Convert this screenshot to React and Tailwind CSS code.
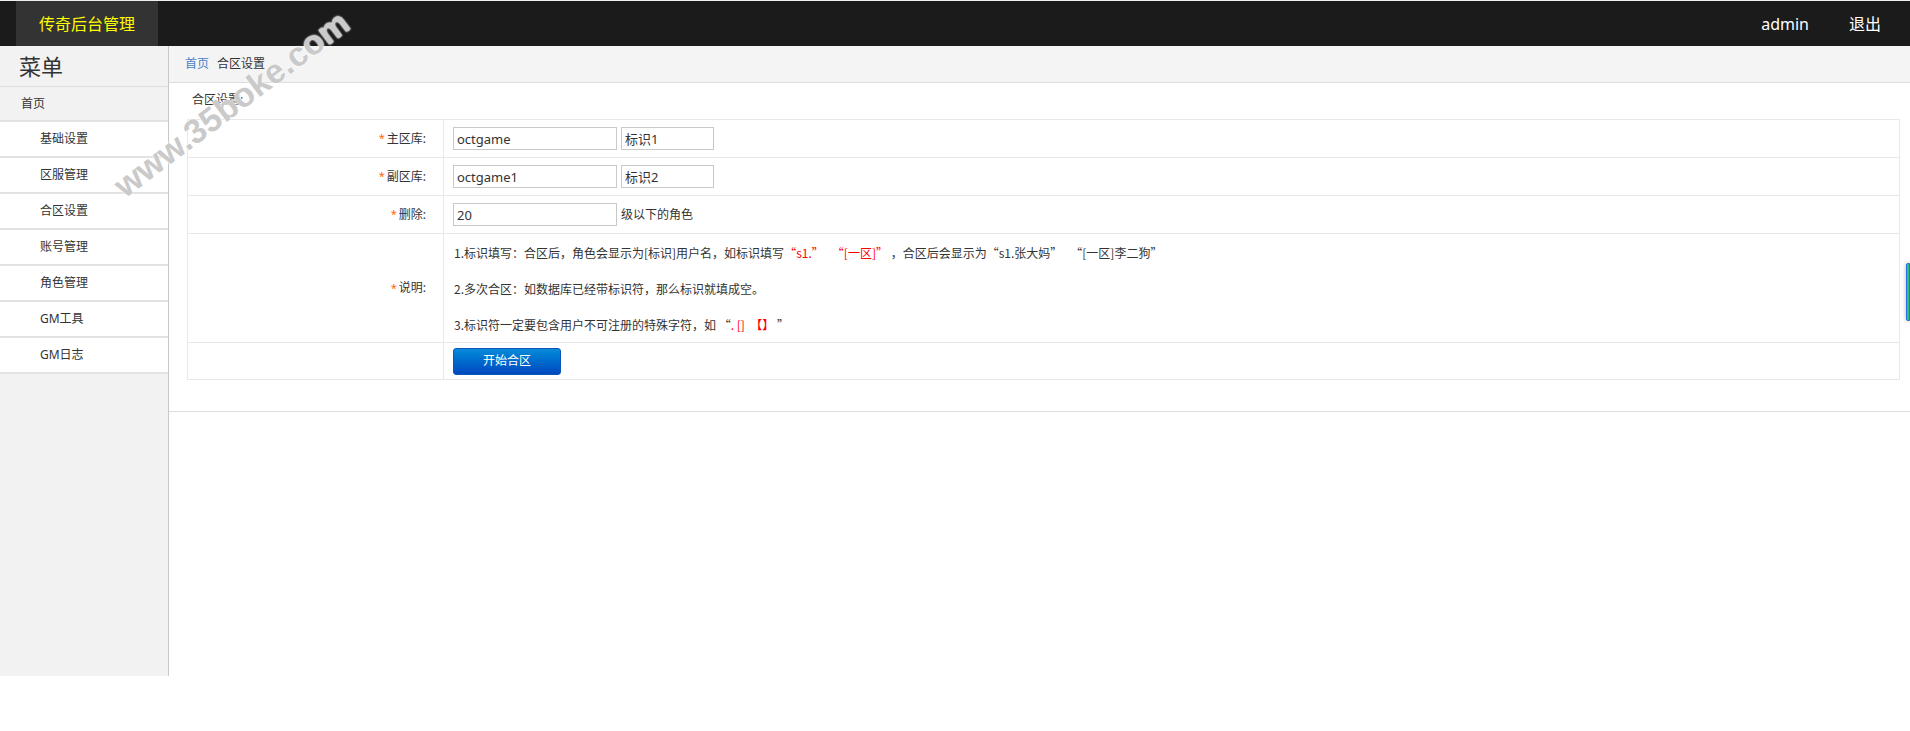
import React from "react";

const menuItems = ["基础设置", "区服管理", "合区设置", "账号管理", "角色管理", "GM工具", "GM日志"];

const Label = ({ text }) => (
  <div className="w-[256px] shrink-0 border-r border-[#e8e8e8] flex items-center justify-end pr-[17px]">
    {text && <span className="text-[#ff6600] text-[11px] mr-[2px]">*</span>}
    {text}
  </div>
);

const Input = ({ value, width }) => (
  <input
    readOnly
    value={value}
    className={`${width} h-[23px] border border-[#c9c9c9] px-[3px] text-[13px] text-[#333] outline-none`}
  />
);

const App = () => {
  return (
    <div className="relative min-h-[731px] bg-white text-[12px] text-[#333] font-['Noto_Sans','Noto_Sans_CJK_SC',sans-serif]">
      <div className="h-px bg-[#efefef]" />
      {/* top bar */}
      <header className="h-[45px] bg-[#1b1b1b] flex items-center justify-between">
        <div className="ml-4 h-full w-[142px] bg-[#333] flex items-center justify-center text-[16px] text-[#ffff00]">
          传奇后台管理
        </div>
        <div className="flex items-center h-full text-[16px] text-white">
          <span className="mr-10">admin</span>
          <span className="mr-[29px]">退出</span>
        </div>
      </header>

      <div className="flex">
        {/* sidebar */}
        <aside className="w-[169px] shrink-0 h-[630px] bg-[#f2f2f2] border-r border-[#c8c8c8]">
          <div className="h-[41px] pl-[19px] flex items-center text-[22px] text-[#333] border-b border-[#dddddd]">菜单</div>
          <div className="h-[33px] pl-[21px] flex items-center">首页</div>
          {menuItems.map((item) => (
            <div key={item} className="h-[36px] pl-[40px] flex items-center bg-white border-t-2 border-[#e2e2e2]">
              {item}
            </div>
          ))}
          <div className="h-[2px] bg-[#e2e2e2]" />
        </aside>

        {/* main */}
        <main className="flex-1">
          <div className="h-[37px] bg-[#f4f4f4] border-b border-[#dddddd] flex items-center pl-4">
            <span className="text-[#4682c8]">首页</span>
            <span className="ml-2">合区设置</span>
          </div>

          <section className="pt-[7px] pb-[31px] pl-[18px] pr-[10px] border-b border-[#dddddd]">
            <div className="h-[20px] leading-[20px] pl-[5px] mb-[9px]">合区设置:</div>

            <div className="border border-[#e8e8e8]">
              <div className="h-[38px] flex border-b border-[#e8e8e8]">
                <Label text="主区库:" />
                <div className="flex items-center pl-[9px] gap-[4px]">
                  <Input value="octgame" width="w-[164px]" />
                  <Input value="标识1" width="w-[93px]" />
                </div>
              </div>
              <div className="h-[38px] flex border-b border-[#e8e8e8]">
                <Label text="副区库:" />
                <div className="flex items-center pl-[9px] gap-[4px]">
                  <Input value="octgame1" width="w-[164px]" />
                  <Input value="标识2" width="w-[93px]" />
                </div>
              </div>
              <div className="h-[38px] flex border-b border-[#e8e8e8]">
                <Label text="删除:" />
                <div className="flex items-center pl-[9px] gap-[4px]">
                  <Input value="20" width="w-[164px]" />
                  <span>级以下的角色</span>
                </div>
              </div>
              <div className="h-[109px] flex border-b border-[#e8e8e8]">
                <Label text="说明:" />
                <div className="pl-[10px] pt-[1px] leading-[36px] font-['Noto_Sans_CJK_SC',sans-serif]">
                  <p>
                    1.标识填写：合区后，角色会显示为[标识]用户名，如标识填写
                    <span className="text-[#ff0000]">“s1.”</span>
                    &nbsp;&nbsp;&nbsp;
                    <span className="text-[#ff0000]">“[一区]”</span>
                    &nbsp;，合区后会显示为“s1.张大妈”&nbsp;&nbsp;&nbsp;“[一区]李二狗”
                  </p>
                  <p>2.多次合区：如数据库已经带标识符，那么标识就填成空。</p>
                  <p>
                    3.标识符一定要包含用户不可注册的特殊字符，如&nbsp;“
                    <span className="text-[#ff0000]">.&nbsp;[]&nbsp;&nbsp;【】</span>
                    &nbsp;”
                  </p>
                </div>
              </div>
              <div className="h-[36px] flex">
                <Label text="" />
                <div className="flex items-center pl-[9px]">
                  <button className="w-[108px] h-[27px] rounded-[3px] border border-[#0a55b8] bg-gradient-to-b from-[#0c8ad9] to-[#0048c0] text-white text-[12px]">
                    开始合区
                  </button>
                </div>
              </div>
            </div>
          </section>
        </main>
      </div>

      {/* watermark */}
      <div className="absolute left-[118px] top-[164px] origin-left -rotate-[37deg] text-[34px] font-bold text-[#cacaca] font-['Liberation_Sans',sans-serif] pointer-events-none select-none [text-shadow:0_0_2px_#fff,0_0_2px_#fff]">
        www.35boke.com
      </div>

      {/* right edge widget */}
      <div className="absolute right-0 top-[263px] w-[4px] h-[58px] bg-[#2fc56a] border border-[#2a6fe0] rounded-l-[2px] shadow-[0_0_4px_rgba(0,0,0,0.3)]" />
    </div>
  );
};

export default App;
